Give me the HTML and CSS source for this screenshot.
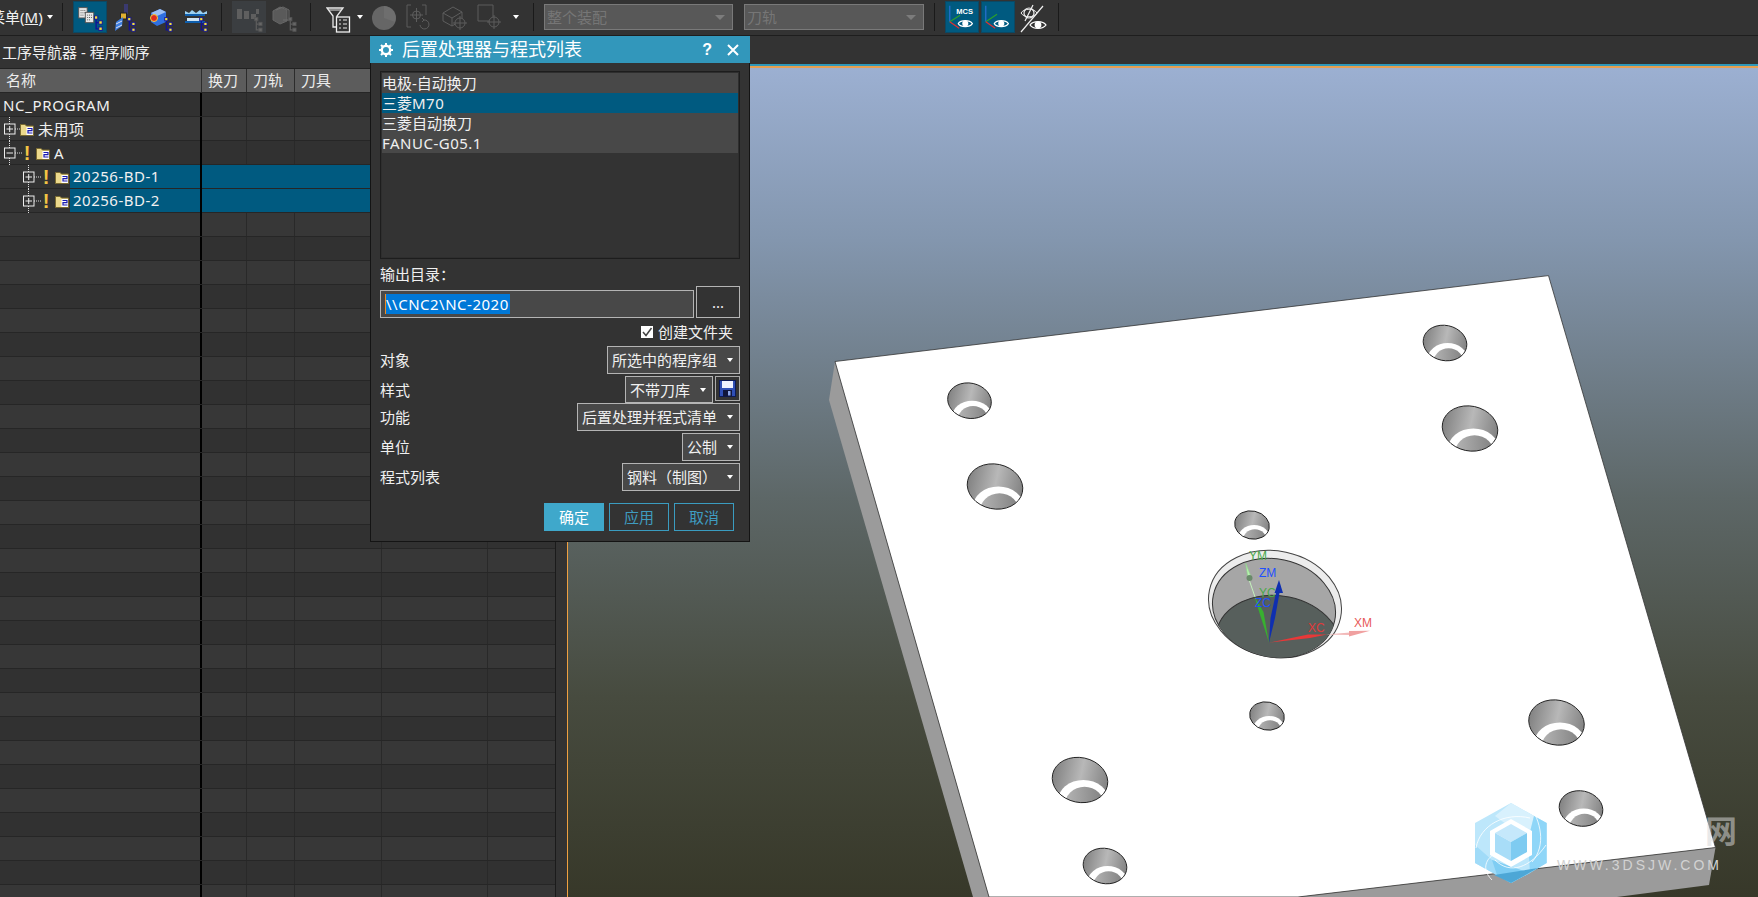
FILE: index.html
```html
<!DOCTYPE html>
<html lang="zh">
<head>
<meta charset="utf-8">
<title>后置处理器与程式列表</title>
<link rel="stylesheet" href="styles.css">
</head>
<body>
<svg class="defs" width="0" height="0">
  <defs>
    <symbol id="tg" viewBox="0 0 10 17">
      <path d="M2.5 1V14.5H6M2.5 8H6" fill="none" stroke="#10109a" stroke-width="1.4"/>
      <rect x="0.7" y="0.7" width="3.6" height="3.6" fill="#f4e23c" stroke="#10109a"/>
      <rect x="5.4" y="6" width="3.6" height="3.6" fill="#f4e23c" stroke="#10109a"/>
      <rect x="5.4" y="12.6" width="3.6" height="3.6" fill="#f4e23c" stroke="#10109a"/>
    </symbol>
    <symbol id="tg-off" viewBox="0 0 10 17">
      <path d="M2.5 1V14.5H6M2.5 8H6" fill="none" stroke="#5d5d5d" stroke-width="1.4"/>
      <rect x="0.7" y="0.7" width="3.6" height="3.6" fill="#666" stroke="#555"/>
      <rect x="5.4" y="6" width="3.6" height="3.6" fill="#666" stroke="#555"/>
      <rect x="5.4" y="12.6" width="3.6" height="3.6" fill="#666" stroke="#555"/>
    </symbol>
    <symbol id="folder" viewBox="0 0 14 13">
      <path d="M0.5 12.5V1.5H5L6.5 3H13.5V12.5Z" fill="#ecd98c" stroke="#7a6a30"/>
      <rect x="6.500" y="4" width="6.500" height="8" fill="#fff"/>
      <path d="M7.500 5.500H12.500M12 5.500V7.700H8V10H12.500" fill="none" stroke="#1a1ab0" stroke-width="1.200"/>
    </symbol>
    <symbol id="plus" viewBox="0 0 20 24">
      <path d="M7.500 0V7M7.500 17V24M13 12H20" fill="none" stroke="#ddd" stroke-dasharray="1 1"/>
      <rect x="2.500" y="7" width="10.500" height="10" fill="none" stroke="#eee"/>
      <path d="M4.500 12H11M7.700 9V15" stroke="#eee"/>
    </symbol>
    <symbol id="minus" viewBox="0 0 20 24">
      <path d="M7.500 0V7M7.500 17V24M13 12H20" fill="none" stroke="#ddd" stroke-dasharray="1 1"/>
      <rect x="2.500" y="7" width="10.500" height="10" fill="none" stroke="#eee"/>
      <path d="M4.500 12H11" stroke="#eee"/>
    </symbol>
    <symbol id="eye" viewBox="0 0 18 12">
      <path d="M1 6C4 1.5 14 1.5 17 6C14 10.500 4 10.500 1 6Z" fill="none" stroke="#fff" stroke-width="1.3"/>
      <circle cx="9" cy="6" r="3.400" fill="#fff"/>
    </symbol>
    <linearGradient id="hg">
      <stop offset="0" stop-color="#828282"/>
      <stop offset=".5" stop-color="#b8b8b8"/>
      <stop offset="1" stop-color="#828282"/>
    </linearGradient>
    <linearGradient id="hi">
      <stop offset="0" stop-color="#b5b5b5"/>
      <stop offset="1" stop-color="#808080"/>
    </linearGradient>
    <clipPath id="hc"><ellipse rx="50" ry="40" transform="rotate(12)"/></clipPath>
    <g id="hole">
      <g clip-path="url(#hc)">
        <ellipse rx="50" ry="40" transform="rotate(12)" fill="url(#hg)"/>
        <ellipse cx="6" cy="38" rx="46" ry="38" fill="#fff"/>
        <ellipse cx="8" cy="48" rx="36" ry="36" fill="url(#hi)"/>
      </g>
      <ellipse rx="50" ry="40" transform="rotate(12)" fill="none" stroke="#222" vector-effect="non-scaling-stroke"/>
    </g>
    <clipPath id="bore"><ellipse cx="1274" cy="608" rx="62" ry="49" transform="rotate(12 1274 608)"/></clipPath>
  </defs>
</svg>

<div class="app">
  <header class="toolbar">
    <div class="menu">菜单(<u>M</u>)</div>
    <i class="caret caret-menu"></i>
    <i class="sep sep-a"></i>

    <div class="tbtn on ml-11">
      <svg width="34" height="31" viewBox="0 0 34 31">
        <rect x="5" y="5" width="9" height="11" fill="#e8e8e8" stroke="#555"/>
        <rect x="12" y="10" width="9" height="11" fill="#e8e8e8" stroke="#555"/>
        <path d="M7 8h5M7 10.500h5M7 13h3M14 13h5M14 15.500h5M14 18h3" stroke="#555" stroke-dasharray="1 1"/>
        <use href="#tg" x="21" y="13" width="10" height="17"/>
      </svg>
    </div>
    <svg class="ticon ml-6" width="24" height="31" viewBox="0 0 24 31">
      <path d="M11 2H15V12H11Z" fill="#3a3a70"/>
      <rect x="7.500" y="11" width="6" height="6" fill="#e0b030" stroke="#222"/>
      <path d="M2 29L3 20L10 15L9 24Z" fill="#3c7ee0"/>
      <path d="M3 22L9 19M3 26L9 23" stroke="#dde" />
      <use href="#tg" x="14" y="15" width="9" height="15"/>
    </svg>
    <svg class="ticon ml-12" width="25" height="31" viewBox="0 0 25 31">
      <path d="M2 11L11 7L17 10V20L8 24L2 20Z" fill="#2f6fe0"/>
      <path d="M2 11L11 7L17 10L8 14Z" fill="#9cc0f5"/>
      <circle cx="5" cy="16" r="3.500" fill="#e02c20" stroke="#f2d040"/>
      <use href="#tg" x="15" y="15" width="9" height="15"/>
    </svg>
    <svg class="ticon ml-11" width="24" height="31" viewBox="0 0 24 31">
      <path d="M1 9L5 11L8 8L12 11L16 8L19 11L23 9V12H1Z" fill="#9cd0f0"/>
      <rect x="1" y="12" width="20" height="2" fill="#0f5fae"/>
      <rect x="1" y="19" width="20" height="2" fill="#0f5fae"/>
      <rect x="3" y="16" width="14" height="3" fill="#cfe5f5"/>
      <use href="#tg" x="15" y="15" width="9" height="15"/>
    </svg>
    <i class="sep sep-b"></i>

    <div class="tbtn dim ml-11">
      <svg width="34" height="31" viewBox="0 0 34 31">
        <path d="M5 7H10V17H5ZM12 9H17V17H12ZM19 12H24V17H19ZM24 7H27V12H24Z" fill="#5f5f5f"/>
        <use href="#tg-off" x="22" y="15" width="9" height="15"/>
      </svg>
    </div>
    <svg class="ticon ml-5" width="26" height="31" viewBox="0 0 26 31">
      <path d="M2 9L9 5L16 8V19L9 22L2 18Z" fill="#5a5a5a" stroke="#666"/>
      <path d="M5 8L12 5L18 8V18H12" fill="none" stroke="#6c6c6c"/>
      <use href="#tg-off" x="17" y="15" width="9" height="15"/>
    </svg>
    <i class="sep sep-c"></i>

    <svg class="ticon ml-15" width="26" height="31" viewBox="0 0 26 31">
      <path d="M1 6H17L11 14V25H7V14Z" fill="none" stroke="#e8e8e8" stroke-width="1.300"/>
      <path d="M3 8H15" stroke="#e8e8e8"/>
      <rect x="10.500" y="15" width="13" height="15" fill="#333" stroke="#f0f0f0" stroke-width="1.300"/>
      <path d="M13 18H15M13 22H15M13 26H15M17 18H21M17 22H21M17 26H21" stroke="#e8e8e8"/>
    </svg>
    <i class="caret ml-5"></i>
    <svg class="ticon ml-9" width="24" height="31" viewBox="0 0 24 31">
      <circle cx="12" cy="16" r="12" fill="#666"/>
      <path d="M12 16V4A12 12 0 0 1 23 20Z" fill="#6e6e6e"/>
    </svg>
    <svg class="ticon ml-11" width="26" height="31" viewBox="0 0 26 31">
      <path d="M5 3H1V25H5M16 3H20V13" fill="none" stroke="#5d5d5d"/>
      <circle cx="10.500" cy="13" r="4" fill="none" stroke="#5d5d5d"/>
      <path d="M10.500 6V20M4 13H17" stroke="#5d5d5d"/>
      <path d="M14 23A4.500 4.500 0 1 0 18 18L16 16M16 20L18 18" fill="none" stroke="#5d5d5d"/>
    </svg>
    <svg class="ticon ml-11" width="25" height="31" viewBox="0 0 25 31">
      <path d="M1 11L11 5L20 10V18L10 24L1 19ZM1 11L10 16L20 10M10 16V24" fill="none" stroke="#5d5d5d"/>
      <circle cx="18" cy="21" r="5" fill="#333" stroke="#5d5d5d"/>
      <path d="M18 14V28M11 21H25" stroke="#5d5d5d"/>
    </svg>
    <svg class="ticon ml-11" width="24" height="31" viewBox="0 0 24 31">
      <path d="M1 3H16V19H1Z" fill="none" stroke="#5d5d5d"/>
      <circle cx="17" cy="20" r="5" fill="#333" stroke="#5d5d5d"/>
      <path d="M17 13V27M10 20H24" stroke="#5d5d5d"/>
    </svg>
    <i class="caret ml-12"></i>
    <i class="sep sep-d"></i>

    <div class="combo combo-a ml-11"><span>整个装配</span><i class="caret caret-dim"></i></div>
    <div class="combo combo-b"><span>刀轨</span><i class="caret caret-dim"></i></div>
    <i class="sep sep-e"></i>

    <div class="tbtn on ml-11">
      <svg width="34" height="31" viewBox="0 0 34 31">
        <path d="M4 3V20" stroke="#2a6fd0" stroke-width="1.300"/>
        <path d="M4 20L15 13" stroke="#2aa02a" stroke-width="1.300"/>
        <path d="M4 20L14 27" stroke="#e03030" stroke-width="1.300"/>
        <text class="mcs" x="11" y="12">MCS</text>
        <use href="#eye" x="12" y="16" width="17" height="12"/>
      </svg>
    </div>
    <div class="tbtn on ml-2">
      <svg width="34" height="31" viewBox="0 0 34 31">
        <path d="M4 3V20" stroke="#2a6fd0" stroke-width="1.300"/>
        <path d="M4 20L16 12" stroke="#2aa02a" stroke-width="1.300"/>
        <path d="M4 20L14 27" stroke="#e03030" stroke-width="1.300"/>
        <use href="#eye" x="12" y="16" width="17" height="12"/>
      </svg>
    </div>
    <svg class="ticon ml-3" width="30" height="31" viewBox="0 0 30 31">
      <circle cx="11" cy="11" r="5" fill="none" stroke="#eee" stroke-width="1.200"/>
      <path d="M3 11C6 6 16 6 19 11C16 16 6 16 3 11Z" fill="none" stroke="#eee"/>
      <path d="M15 3L7 19M25 4L3 30" stroke="#eee" stroke-width="1.200"/>
      <use href="#eye" x="11" y="17" width="18" height="12"/>
    </svg>
    <i class="sep sep-f"></i>
  </header>

  <main class="main">
    <section class="nav">
      <div class="nav-title">工序导航器 - 程序顺序</div>
      <div class="nav-head">
        <div class="h c1">名称</div><div class="h c2">换刀</div><div class="h c3">刀轨</div><div class="h c4">刀具</div><div class="h c5"></div><div class="h c6"></div>
      </div>
      <div class="rows">
        <div class="row"><div class="c c1"><span class="lbl lbl-root">NC_PROGRAM</span></div><div class="c c2"></div><div class="c c3"></div><div class="c c4"></div><div class="c c5"></div><div class="c c6"></div></div>
        <div class="row"><div class="c c1 tree lv0"><svg class="exp" width="20" height="24"><use href="#plus"/></svg><svg class="fold fold-top" width="14" height="13"><use href="#folder"/></svg><span class="lbl">未用项</span></div><div class="c c2"></div><div class="c c3"></div><div class="c c4"></div><div class="c c5"></div><div class="c c6"></div></div>
        <div class="row"><div class="c c1 tree lv0"><svg class="exp" width="20" height="24"><use href="#minus"/></svg><b class="warn">!</b><svg class="fold" width="14" height="13"><use href="#folder"/></svg><span class="lbl">A</span></div><div class="c c2"></div><div class="c c3"></div><div class="c c4"></div><div class="c c5"></div><div class="c c6"></div></div>
        <div class="row sel"><div class="c c1 tree lv1"><svg class="exp" width="20" height="24"><use href="#plus"/></svg><b class="warn">!</b><svg class="fold" width="14" height="13"><use href="#folder"/></svg><span class="lbl lbl-sel">20256-BD-1</span></div><div class="c c2"></div><div class="c c3"></div><div class="c c4"></div><div class="c c5"></div><div class="c c6"></div></div>
        <div class="row sel"><div class="c c1 tree lv1"><svg class="exp" width="20" height="24"><use href="#plus"/></svg><b class="warn">!</b><svg class="fold" width="14" height="13"><use href="#folder"/></svg><span class="lbl lbl-sel">20256-BD-2</span></div><div class="c c2"></div><div class="c c3"></div><div class="c c4"></div><div class="c c5"></div><div class="c c6"></div></div>
        <div class="row"><div class="c c1"></div><div class="c c2"></div><div class="c c3"></div><div class="c c4"></div><div class="c c5"></div><div class="c c6"></div></div>
        <div class="row"><div class="c c1"></div><div class="c c2"></div><div class="c c3"></div><div class="c c4"></div><div class="c c5"></div><div class="c c6"></div></div>
        <div class="row"><div class="c c1"></div><div class="c c2"></div><div class="c c3"></div><div class="c c4"></div><div class="c c5"></div><div class="c c6"></div></div>
        <div class="row"><div class="c c1"></div><div class="c c2"></div><div class="c c3"></div><div class="c c4"></div><div class="c c5"></div><div class="c c6"></div></div>
        <div class="row"><div class="c c1"></div><div class="c c2"></div><div class="c c3"></div><div class="c c4"></div><div class="c c5"></div><div class="c c6"></div></div>
        <div class="row"><div class="c c1"></div><div class="c c2"></div><div class="c c3"></div><div class="c c4"></div><div class="c c5"></div><div class="c c6"></div></div>
        <div class="row"><div class="c c1"></div><div class="c c2"></div><div class="c c3"></div><div class="c c4"></div><div class="c c5"></div><div class="c c6"></div></div>
        <div class="row"><div class="c c1"></div><div class="c c2"></div><div class="c c3"></div><div class="c c4"></div><div class="c c5"></div><div class="c c6"></div></div>
        <div class="row"><div class="c c1"></div><div class="c c2"></div><div class="c c3"></div><div class="c c4"></div><div class="c c5"></div><div class="c c6"></div></div>
        <div class="row"><div class="c c1"></div><div class="c c2"></div><div class="c c3"></div><div class="c c4"></div><div class="c c5"></div><div class="c c6"></div></div>
        <div class="row"><div class="c c1"></div><div class="c c2"></div><div class="c c3"></div><div class="c c4"></div><div class="c c5"></div><div class="c c6"></div></div>
        <div class="row"><div class="c c1"></div><div class="c c2"></div><div class="c c3"></div><div class="c c4"></div><div class="c c5"></div><div class="c c6"></div></div>
        <div class="row"><div class="c c1"></div><div class="c c2"></div><div class="c c3"></div><div class="c c4"></div><div class="c c5"></div><div class="c c6"></div></div>
        <div class="row"><div class="c c1"></div><div class="c c2"></div><div class="c c3"></div><div class="c c4"></div><div class="c c5"></div><div class="c c6"></div></div>
        <div class="row"><div class="c c1"></div><div class="c c2"></div><div class="c c3"></div><div class="c c4"></div><div class="c c5"></div><div class="c c6"></div></div>
        <div class="row"><div class="c c1"></div><div class="c c2"></div><div class="c c3"></div><div class="c c4"></div><div class="c c5"></div><div class="c c6"></div></div>
        <div class="row"><div class="c c1"></div><div class="c c2"></div><div class="c c3"></div><div class="c c4"></div><div class="c c5"></div><div class="c c6"></div></div>
        <div class="row"><div class="c c1"></div><div class="c c2"></div><div class="c c3"></div><div class="c c4"></div><div class="c c5"></div><div class="c c6"></div></div>
        <div class="row"><div class="c c1"></div><div class="c c2"></div><div class="c c3"></div><div class="c c4"></div><div class="c c5"></div><div class="c c6"></div></div>
        <div class="row"><div class="c c1"></div><div class="c c2"></div><div class="c c3"></div><div class="c c4"></div><div class="c c5"></div><div class="c c6"></div></div>
        <div class="row"><div class="c c1"></div><div class="c c2"></div><div class="c c3"></div><div class="c c4"></div><div class="c c5"></div><div class="c c6"></div></div>
        <div class="row"><div class="c c1"></div><div class="c c2"></div><div class="c c3"></div><div class="c c4"></div><div class="c c5"></div><div class="c c6"></div></div>
        <div class="row"><div class="c c1"></div><div class="c c2"></div><div class="c c3"></div><div class="c c4"></div><div class="c c5"></div><div class="c c6"></div></div>
        <div class="row"><div class="c c1"></div><div class="c c2"></div><div class="c c3"></div><div class="c c4"></div><div class="c c5"></div><div class="c c6"></div></div>
        <div class="row"><div class="c c1"></div><div class="c c2"></div><div class="c c3"></div><div class="c c4"></div><div class="c c5"></div><div class="c c6"></div></div>
        <div class="row"><div class="c c1"></div><div class="c c2"></div><div class="c c3"></div><div class="c c4"></div><div class="c c5"></div><div class="c c6"></div></div>
        <div class="row"><div class="c c1"></div><div class="c c2"></div><div class="c c3"></div><div class="c c4"></div><div class="c c5"></div><div class="c c6"></div></div>
        <div class="row"><div class="c c1"></div><div class="c c2"></div><div class="c c3"></div><div class="c c4"></div><div class="c c5"></div><div class="c c6"></div></div>
        <div class="row"><div class="c c1"></div><div class="c c2"></div><div class="c c3"></div><div class="c c4"></div><div class="c c5"></div><div class="c c6"></div></div>
        <div class="row"><div class="c c1"></div><div class="c c2"></div><div class="c c3"></div><div class="c c4"></div><div class="c c5"></div><div class="c c6"></div></div>
      </div>
    </section>

    <section class="viewport">
      <svg class="scene" width="1191" height="831" viewBox="567 66 1191 831">
        <polygon points="835,361.500 829,400 973,897 989,897" fill="#9b9b9b"/>
        <polygon points="1715.500,847.500 1709,885 1617,897 1298,897" fill="#9b9b9b"/>
        <polygon points="835,361.500 1548.500,275.600 1715.500,847.500 1298,897 989,897" fill="#fff" stroke="#333" stroke-width=".8"/>

        <use href="#hole" transform="translate(969.500 400.700) scale(.44)"/>
        <use href="#hole" transform="translate(1445 343) scale(.44)"/>
        <use href="#hole" transform="translate(1581 808.500) scale(.44)"/>
        <use href="#hole" transform="translate(1105 866) scale(.44)"/>
        <use href="#hole" transform="translate(995 486.500) scale(.56)"/>
        <use href="#hole" transform="translate(1470 428.500) scale(.56)"/>
        <use href="#hole" transform="translate(1556.500 722.500) scale(.56)"/>
        <use href="#hole" transform="translate(1080 780) scale(.56)"/>
        <use href="#hole" transform="translate(1252 525) scale(.35)"/>
        <use href="#hole" transform="translate(1267 716) scale(.35)"/>

        <ellipse cx="1275" cy="604" rx="67" ry="53" transform="rotate(12 1275 604)" fill="#ececec" stroke="#444"/>
        <ellipse cx="1274" cy="608" rx="62" ry="49" transform="rotate(12 1274 608)" fill="#a6a6a6" stroke="#333"/>
        <g clip-path="url(#bore)">
          <ellipse cx="1279" cy="645" rx="64" ry="49" transform="rotate(12 1279 645)" fill="#575f5c" stroke="#333"/>
        </g>

        <path d="M1248 578L1245.700 563.300L1251.500 578Z" fill="#b8f0b0" stroke="#8fdc8a" stroke-width=".6"/>
        <path d="M1248.500 578L1255 597" stroke="#c4f2bc" stroke-width="1"/>
        <path d="M1269 642.700L1259.500 613L1254.500 596.500L1263.500 612Z" fill="#38b030"/>
        <circle cx="1249.500" cy="578" r="3" fill="#6a8a6a"/>
        <path d="M1269 642.700L1270.500 618L1276 593L1279.500 593L1275 618Z" fill="#0f2fb0"/>
        <path d="M1274.500 593L1279 580L1283 593Z" fill="#0f2fb0"/>
        <path d="M1326 634.500L1350 632.500V635Z" fill="#f2b8b8"/>
        <path d="M1349 631L1370 630.700L1349 636.500Z" fill="#f0a0a0"/>
        <path d="M1269 642.700L1308 634.500L1327 634.500L1310 638Z" fill="#e83838"/>
        <text class="ax ax-g" x="1249" y="560">YM</text>
        <text class="ax ax-b" x="1259" y="577">ZM</text>
        <text class="ax ax-g" x="1259" y="597">YC</text>
        <text class="ax ax-b" x="1255" y="607">ZC</text>
        <text class="ax ax-r" x="1308" y="632">XC</text>
        <text class="ax ax-p" x="1354" y="627">XM</text>

        <g class="logo">
          <polygon points="1511,803 1546.700,823 1546.700,863 1511,883 1475,863 1475,823" fill="#bde7fb"/>
          <polygon points="1511,803 1534,816 1528,840 1495,816" fill="#d8f1fd"/>
          <polygon points="1534,816 1546.700,823 1546.700,863 1530,873 1528,840" fill="#8fd6f8"/>
          <polygon points="1475,845 1492,860 1530,873 1511,883 1475,863" fill="#a0dbf8"/>
          <polygon points="1492,860 1530,873 1511,883 1497,875" fill="#7fcdf3"/>
          <polygon points="1494,875 1511,883 1538,868" fill="#4da7d6"/>
          <polygon points="1511,819 1532,831 1532,855 1511,867 1490,855 1490,831" fill="#fff"/>
          <polygon points="1511,824 1527,833 1511,842 1495,833" fill="#c5e8fb"/>
          <polygon points="1495,833 1511,842 1511,861 1495,852" fill="#a8ddf8"/>
          <polygon points="1527,833 1511,842 1511,861 1527,852" fill="#7ecbf1"/>
          <path d="M1476 848C1480 825 1505 812 1530 818M1530 806C1540 820 1547 845 1532 862M1492 880C1480 868 1488 858 1493 855M1495 860C1510 875 1530 868 1546 845" fill="none" stroke="#fff" stroke-width=".8"/>
          <text class="wm-big" x="1705" y="843">网</text>
          <text class="wm" x="1557" y="870">WWW.3DSJW.COM</text>
        </g>
      </svg>
    </section>
  </main>

  <aside class="dialog">
    <div class="dlg-title">
      <svg class="gear" width="14" height="14" viewBox="0 0 14 14">
        <circle cx="7" cy="7" r="4.200" fill="none" stroke="#fff" stroke-width="2.400"/>
        <path d="M7 0V2.500M7 11.500V14M0 7H2.500M11.500 7H14M2 2L3.800 3.800M10.200 10.200L12 12M12 2L10.200 3.800M3.800 10.200L2 12" stroke="#fff" stroke-width="2"/>
      </svg>
      <span class="dlg-name">后置处理器与程式列表</span>
      <span class="dlg-help">?</span>
      <svg class="dlg-close" width="12" height="12" viewBox="0 0 12 12"><path d="M1 1L11 11M11 1L1 11" stroke="#fff" stroke-width="2"/></svg>
    </div>
    <div class="dlg-body">
      <div class="list">
        <div class="item">电极-自动换刀</div>
        <div class="item item-on">三菱<span class="lat">M70</span></div>
        <div class="item">三菱自动换刀</div>
        <div class="item lat">FANUC-G05.1</div>
      </div>
      <div class="out-label">输出目录：</div>
      <div class="out-row">
        <div class="out-input"><i class="text-caret"></i><span class="out-sel lat">\\CNC2\NC-2020</span></div>
        <div class="out-btn">...</div>
      </div>
      <div class="check-row">
        <svg class="check" width="12" height="12" viewBox="0 0 12 12"><rect width="12" height="12" fill="#fff"/><path d="M2 6L5 9.500L10.500 2" fill="none" stroke="#444" stroke-width="1.500"/></svg>
        <span>创建文件夹</span>
      </div>
      <div class="f-row">
        <span>对象</span>
        <div class="sel-box">所选中的程序组<i class="caret"></i></div>
      </div>
      <div class="f-row f-tight">
        <span>样式</span>
        <div class="sel-box">不带刀库<i class="caret"></i></div>
        <div class="save">
          <svg width="17" height="17" viewBox="0 0 17 17">
            <rect x="0.500" y="0.500" width="16" height="16" fill="#2f4fb5" stroke="#0c1a55"/>
            <rect x="3" y="1" width="11" height="7" fill="#eef2ff"/>
            <rect x="4" y="10" width="9" height="6.500" fill="#10163c"/>
            <rect x="9" y="11" width="2.500" height="4.500" fill="#8ea8e8"/>
          </svg>
        </div>
      </div>
      <div class="f-row">
        <span>功能</span>
        <div class="sel-box">后置处理并程式清单<i class="caret"></i></div>
      </div>
      <div class="f-row">
        <span>单位</span>
        <div class="sel-box">公制<i class="caret"></i></div>
      </div>
      <div class="f-row">
        <span>程式列表</span>
        <div class="sel-box">钢料（制图）<i class="caret"></i></div>
      </div>
      <div class="actions">
        <div class="btn btn-main">确定</div>
        <div class="btn">应用</div>
        <div class="btn">取消</div>
      </div>
    </div>
  </aside>
</div>
</body>
</html>
```

FILE: styles.css
```css
* { box-sizing: border-box; }
html, body { margin: 0; padding: 0; background: #333; }
body { overflow: hidden; }
.defs { position: absolute; }
.app {
  position: relative;
  width: 1758px;
  height: 897px;
  overflow: hidden;
  background: #333;
  color: #f0f0f0;
  font: 15px/20px "Noto Sans", "Noto Sans CJK SC", sans-serif;
  display: flex;
  flex-direction: column;
}
i, b { font-style: normal; display: block; }
.lat { letter-spacing: .5px; }

/* toolbar */
.toolbar {
  flex: none;
  height: 36px;
  display: flex;
  align-items: center;
  padding-bottom: 1px;
  background: #333;
  border-bottom: 1px solid #1e1e1e;
}
.menu { flex: none; width: 46px; margin-left: -10px; white-space: nowrap; font-size: 15px; }
.caret {
  flex: none;
  width: 0; height: 0;
  border-left: 3.500px solid transparent;
  border-right: 3.500px solid transparent;
  border-top: 4px solid #fff;
}
.caret-menu { margin-left: 11px; }
.caret-dim { border-top-color: #7c7c7c; border-left-width: 5px; border-right-width: 5px; border-top-width: 5px; }
.sep { flex: none; width: 1px; height: 28px; background: #1a1a1a; }
.sep-a { margin-left: 9px; }
.sep-b { margin-left: 13px; }
.sep-c { margin-left: 13px; }
.sep-d { margin-left: 14px; }
.sep-e { margin-left: 10px; }
.sep-f { margin-left: 10px; }
.ml-2 { margin-left: 2px; }
.ml-3 { margin-left: 3px; }
.ml-5 { margin-left: 5px; }
.ml-6 { margin-left: 6px; }
.ml-9 { margin-left: 9px; }
.ml-11 { margin-left: 10px; }
.ml-12 { margin-left: 12px; }
.ml-15 { margin-left: 15px; }
.ticon { flex: none; display: block; }
.tbtn { flex: none; width: 34px; height: 32px; display: flex; align-items: center; justify-content: center; }
.tbtn.on { background: #005a80; border: 1px solid #0c4863; }
.tbtn.dim { background: #3b3e41; }
.mcs { font: bold 8px "Liberation Sans", sans-serif; fill: #fff; }
.combo {
  flex: none;
  height: 26px;
  display: flex;
  align-items: center;
  justify-content: space-between;
  padding: 0 3px 0 2px;
  background: #585858;
  border: 1px solid #797979;
  color: #767676;
}
.combo .caret { margin-right: 4px; }
.combo-a { width: 189px; }
.combo-b { width: 180px; margin-left: 11px; }

/* main */
.main { flex: 1; display: flex; min-height: 0; }
.nav { flex: none; width: 567px; padding-right: 11px; display: flex; flex-direction: column; position: relative; }
.nav::after { content: ""; position: absolute; left: 555px; top: 33px; bottom: 0; width: 1px; background: #1b1b1b; }
.nav-title { flex: none; height: 33px; padding: 6px 0 0 2px; border-bottom: 1px solid #222; line-height: 20px; }
.nav-head { flex: none; height: 24px; display: flex; background: #5c5c5c; border-bottom: 1px solid #262626; }
.h { height: 23px; padding-left: 6px; line-height: 22px; border-right: 1px solid #2c2c2c; color: #ececec; }
.h.c1 { padding-left: 6px; border-right-color: #2c2c2c; }
.c1 { flex: none; width: 202px; }
.c2 { flex: none; width: 45px; }
.c3 { flex: none; width: 48px; }
.c4 { flex: none; width: 87px; }
.c5 { flex: none; width: 106px; }
.c6 { flex: none; width: 68px; }
.rows { flex: 1; overflow: hidden; }
.row { height: 24px; display: flex; background: #313131; border-bottom: 1px solid #262626; }
.row:nth-child(even) { background: #373737; }
.c { height: 23px; border-right: 1px solid #292929; }
.c.c1 { border-right: 2px solid #000; display: flex; align-items: center; }
.row.sel { background: #333; }
.row.sel .c:not(.c1) { background: #005a80; border-right-color: #005a80; }
.tree { height: 24px; }
.lv0 { padding-left: 2px; }
.lv1 { padding-left: 21px; }
.exp { flex: none; }
.fold { flex: none; }
.fold-top { margin-left: -2px; }
.warn {
  flex: none;
  width: 8px;
  margin: 0 5px 0 1px;
  text-align: center;
  color: #f2c544;
  font: bold 20px/20px "Liberation Sans", sans-serif;
}
.lbl { padding-left: 4px; white-space: nowrap; line-height: 23px; letter-spacing: .5px; }
.lbl-root { padding-left: 3px; letter-spacing: .65px; line-height: 24px; }
.lbl-sel { height: 23px; align-self: flex-start; flex: 1; background: #005a80; margin-left: 1px; padding-left: 3px; }

/* viewport */
.viewport {
  flex: 1;
  min-width: 0;
  margin-top: 28px;
  border-top: 2px solid #2f98b9;
  position: relative;
  background: linear-gradient(#9cb0d2 0%, #8396ae 21%, #5d6767 52%, #474b3f 76%, #373829 100%);
}
.viewport::before { content: ""; position: absolute; inset: 0 auto 0 0; width: 1px; background: #f0a040; }
.viewport::after { content: ""; position: absolute; inset: 0 0 auto 0; height: 2px; background: #e8a050; }
.scene { display: block; }
.ax { font: 12px "Liberation Sans", sans-serif; }
.ax-g { fill: #4aa84a; }
.ax-b { fill: #2050ff; }
.ax-r { fill: #e03a3a; }
.ax-p { fill: #e85a5a; }
.wm { font: 14px "Liberation Sans", sans-serif; letter-spacing: 3px; fill: #d2d2d2; }
.wm-big { font: bold 32px "Noto Sans CJK SC", sans-serif; fill: #d6d6d6; fill-opacity: .55; }

/* dialog */
.dialog {
  position: absolute;
  left: 370px;
  top: 36px;
  width: 380px;
  height: 506px;
  background: #333;
  border: 1px solid #141414;
  border-top: 0;
  display: flex;
  flex-direction: column;
}
.dlg-title {
  flex: none;
  height: 27px;
  margin: 0 -1px;
  background: #3297bb;
  display: flex;
  align-items: center;
  color: #fff;
}
.gear { flex: none; margin-left: 9px; }
.dlg-name { margin-left: 9px; font-size: 18px; line-height: 27px; flex: 1; white-space: nowrap; }
.dlg-help { font: bold 16px/27px "Liberation Sans", sans-serif; margin-right: 15px; }
.dlg-close { flex: none; margin-right: 11px; }
.dlg-body { flex: 1; padding: 8px 9px 0; display: flex; flex-direction: column; }
.list {
  flex: none;
  height: 188px;
  padding: 1px;
  background: #333;
  border: 1px solid #1d1d1d;
  box-shadow: inset 0 0 0 1px #2e2e2e;
}
.item { height: 20px; line-height: 20px; background: #484848; white-space: nowrap; }
.item-on { background: #005a80; }
.out-label { flex: none; height: 26px; padding-top: 5px; line-height: 20px; }
.out-row { flex: none; height: 33px; display: flex; align-items: flex-end; gap: 2px; }
.out-input {
  flex: 1;
  height: 28px;
  padding: 3px 0 0 4px;
  display: flex;
  align-items: flex-start;
  background: #484848;
  border: 1px solid #b4b4b4;
}
.text-caret { flex: none; width: 1px; height: 20px; background: #f08c20; }
.out-sel { background: #0078d7; color: #fff; line-height: 20px; padding-right: 1px; white-space: nowrap; }
.out-btn {
  flex: none;
  width: 44px;
  height: 32px;
  border: 1px solid #b4b4b4;
  text-align: center;
  line-height: 30px;
}
.check-row {
  flex: none;
  height: 28px;
  padding-right: 7px;
  display: flex;
  align-items: center;
  justify-content: flex-end;
  gap: 5px;
}
.check { flex: none; }
.f-row { flex: none; height: 28px; margin-bottom: 2px; display: flex; align-items: center; justify-content: flex-end; }
.f-row > span:first-child { margin-right: auto; }
.f-tight { margin-bottom: 0; height: 27px; align-items: flex-start; }
.f-tight > span:first-child { line-height: 28px; }
.sel-box {
  flex: none;
  height: 28px;
  padding: 0 6px 0 4px;
  display: flex;
  align-items: center;
  gap: 10px;
  background: #484848;
  border: 1px solid #b4b4b4;
  white-space: nowrap;
}
.f-tight .sel-box { height: 27px; }
.save {
  flex: none;
  width: 25px;
  height: 25px;
  margin-left: 2px;
  display: flex;
  align-items: center;
  justify-content: center;
  border: 1px solid #aaa;
}
.actions { flex: none; margin-top: 10px; padding-right: 6px; display: flex; justify-content: flex-end; gap: 5px; }
.btn {
  width: 60px;
  height: 28px;
  border: 1px solid #3a9cc0;
  color: #3f9cc0;
  text-align: center;
  line-height: 26px;
}
.btn-main { background: #3fa8cb; color: #fff; border-color: #3fa8cb; }
```
